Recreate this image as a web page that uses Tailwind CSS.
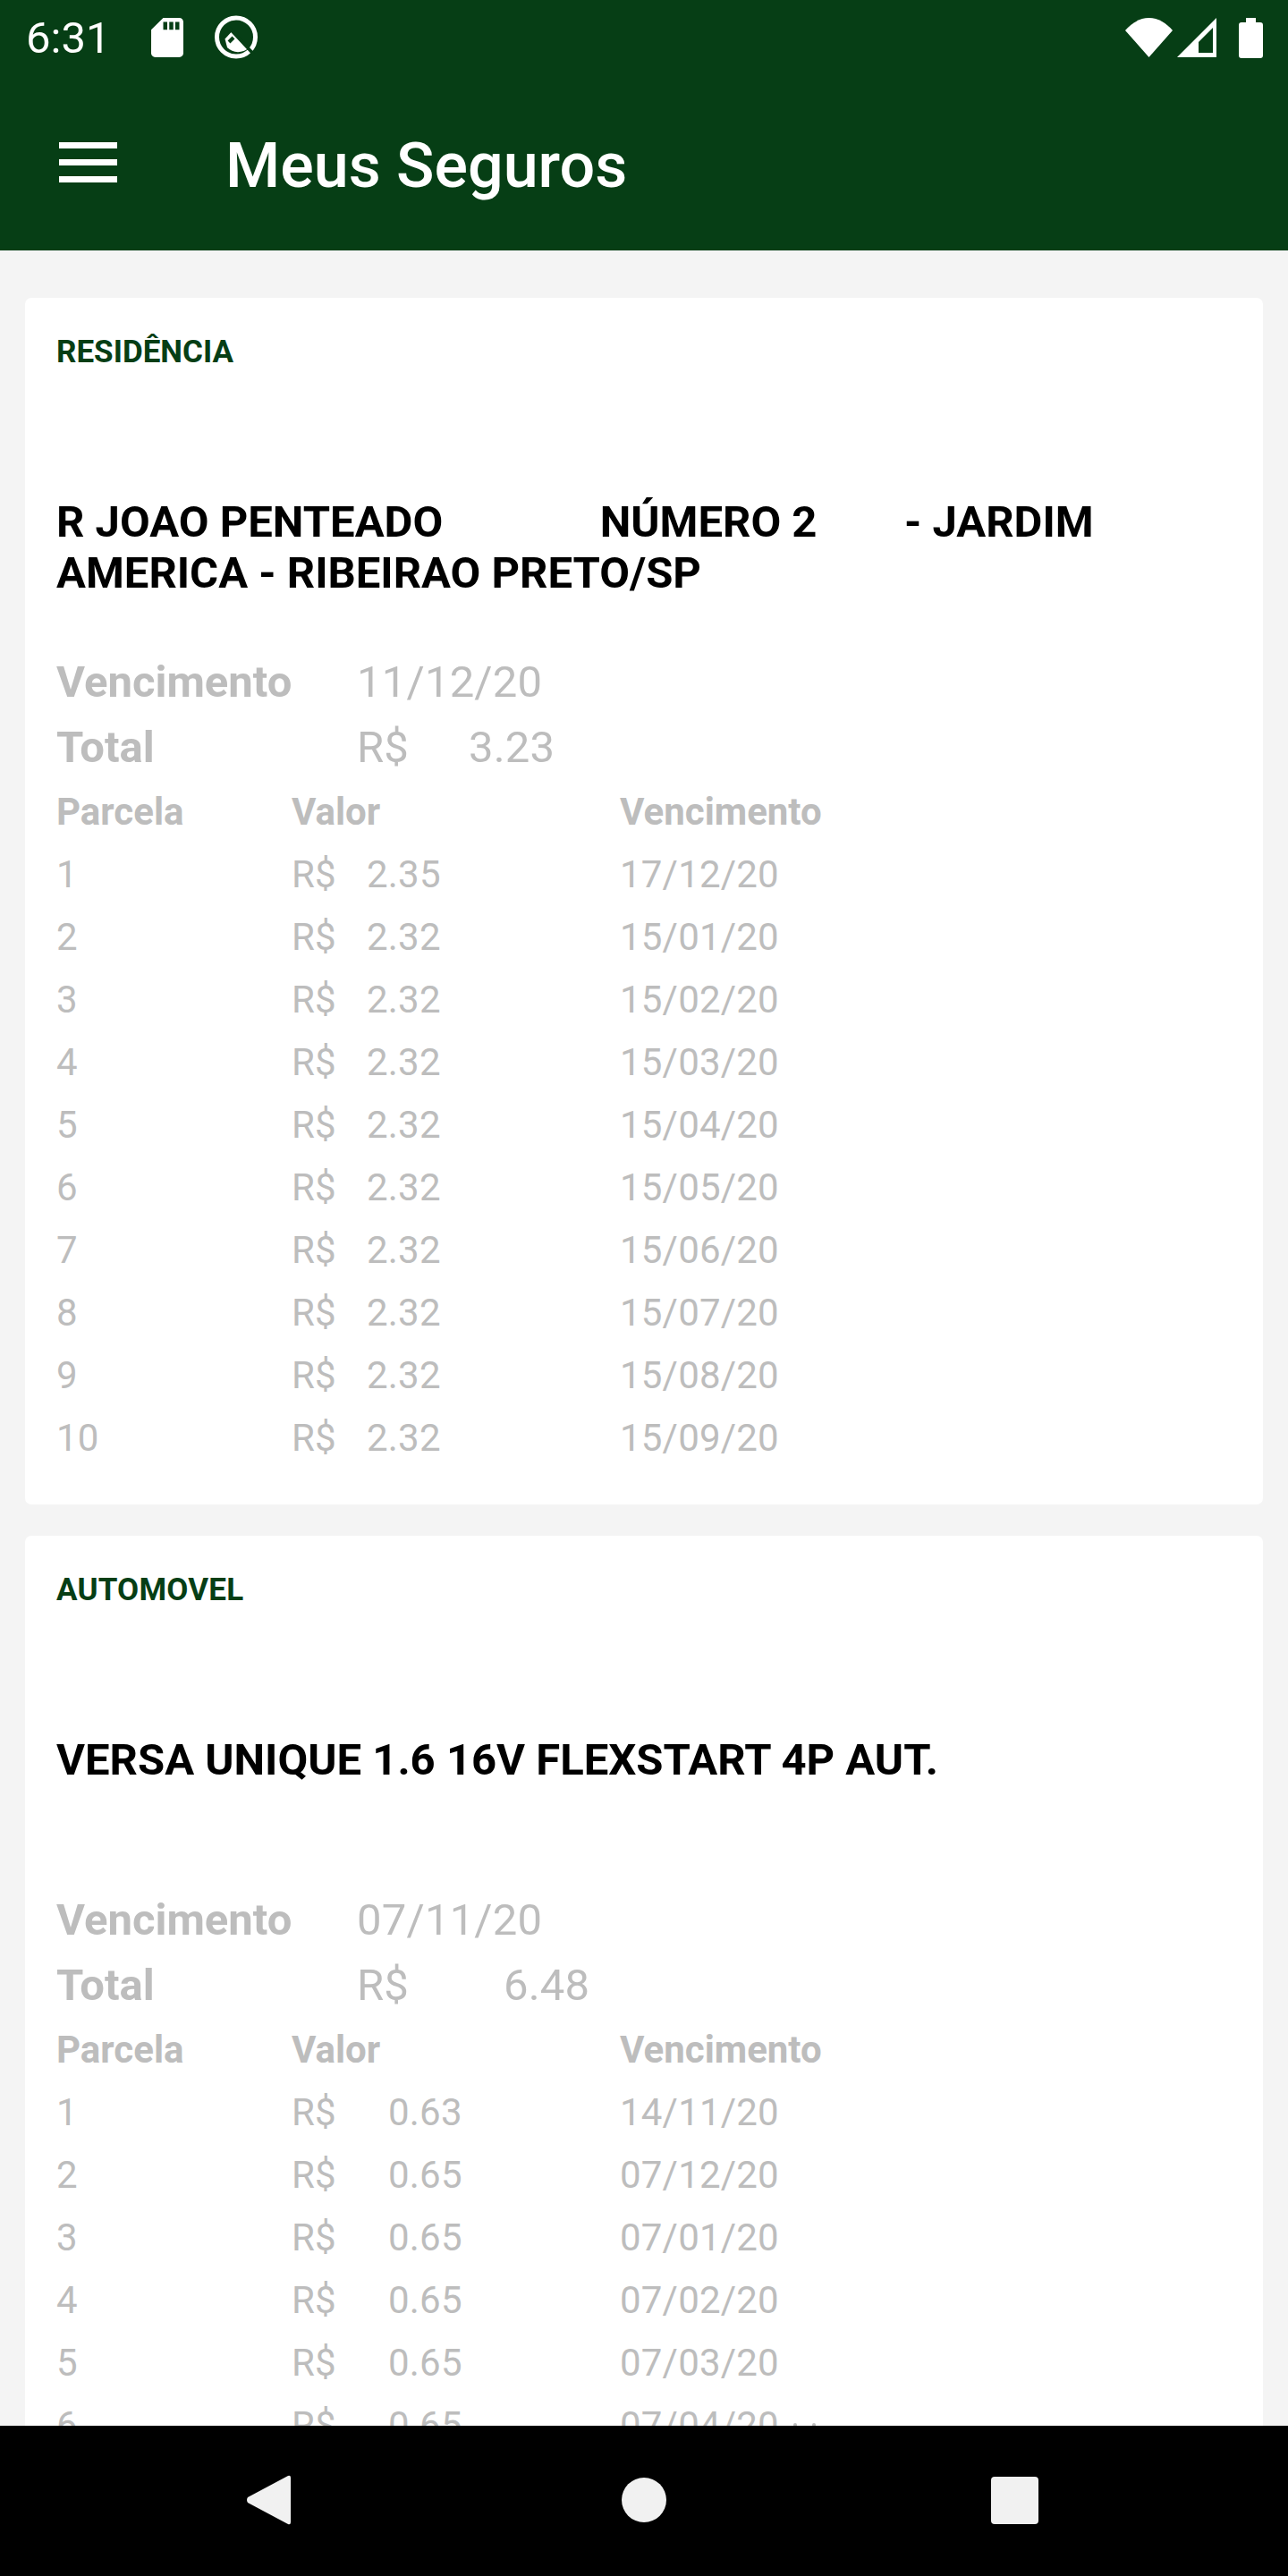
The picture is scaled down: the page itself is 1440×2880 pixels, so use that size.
<!DOCTYPE html>
<html lang="pt">
<head>
<meta charset="utf-8">
<script src="https://cdn.jsdelivr.net/npm/@tailwindcss/browser@4"></script>
</head>
<body class="m-0">
<div class="w-[1440px] h-[2880px] flex flex-col overflow-hidden bg-[#f4f4f4] font-['Roboto',sans-serif]">
  <header class="bg-[#063e15] text-white shrink-0">
    <div class="h-[84px] flex items-center pl-[29px] pr-[28px]">
      <span class="text-[49px] leading-none w-[140px]">6:31</span>
      <svg class="w-[36px] h-[44px] mr-[34px]" viewBox="4 2 16 20" preserveAspectRatio="none" fill="#fff"><path d="M18 2h-8L4.020 8 4 20c0 1.100.9 2 2 2h12c1.100 0 2-.9 2-2V4c0-1.100-.9-2-2-2zm-6 6h-2V4h2v4zm3 0h-2V4h2v4zm3 0h-2V4h2v4z"/></svg>
      <svg class="w-[50px] h-[50px]" viewBox="0 0 50 50" fill="none"><circle cx="25" cy="24.500" r="21.500" stroke="#fff" stroke-width="5"/><path d="M12.500 26.500 20.500 18 39 36.500A17 17 0 0 1 15 36Z" fill="#fff"/><path d="M17 30 22 25" stroke="#063e15" stroke-width="4"/><path d="M16 13 45 44" stroke="#063e15" stroke-width="3.500"/></svg>
      <div class="flex-1"></div>
      <svg class="w-[53px] h-[44px]" viewBox="0 0 53 44" fill="#fff"><path d="M0 14C7 6 16 0 26.500 0S46 6 53 14L26.500 44Z"/></svg>
      <svg class="w-[44px] h-[44px] ml-[5px]" viewBox="0 0 44 44" fill="#fff"><path fill-rule="evenodd" d="M44 0V44H0ZM40 11 24 27V39H40Z"/></svg>
      <svg class="w-[27px] h-[45px] ml-[25px]" viewBox="0 0 27 45" fill="#fff"><path d="M8 0H19V5H24Q27 5 27 8V42Q27 45 24 45H3Q0 45 0 42V8Q0 5 3 5H8Z"/></svg>
    </div>
    <div class="h-[196px] flex items-center pl-[66px] pb-[2px]">
      <div class="w-[65px] h-[45px] flex flex-col justify-between">
        <div class="h-[7px] bg-white"></div>
        <div class="h-[7px] bg-white"></div>
        <div class="h-[7px] bg-white"></div>
      </div>
      <h1 class="ml-[121px] mt-[8px] text-[70px] leading-none font-medium">Meus Seguros</h1>
    </div>
  </header>

  <main class="flex-1 min-h-0 overflow-hidden px-[28px] pt-[53px] flex flex-col gap-[35px]">
    <section class="bg-white rounded-[7px] h-[1349px] shrink-0 px-[35px] pt-[40px] text-[#bdbdbd]">
      <p class="text-[#063e15] text-[35px] leading-[42px] font-bold">RESIDÊNCIA</p>
      <p class="mt-[140px] text-black text-[49px] leading-[57px] font-bold whitespace-pre-wrap">R JOAO PENTEADO              <span class="ml-[5px]">NÚMERO 2</span>        - JARDIM AMERICA - RIBEIRAO PRETO/SP</p>
      <div class="mt-[57px] flex h-[73px] items-center text-[49px]"><b class="w-[336px] font-bold">Vencimento</b><span class="tracking-[0.2px]">11/12/20</span></div>
      <div class="flex h-[73px] items-center text-[49px]"><b class="w-[336px] font-bold">Total</b><span class="w-[125px]">R$</span><span class="tracking-[0.2px]">3.23</span></div>
      <div class="flex h-[70px] items-center text-[42px] font-bold"><span class="w-[263px]">Parcela</span><span class="w-[367px]">Valor</span><span>Vencimento</span></div>
      <div class="flex h-[70px] items-center text-[42px] tracking-[0.2px]"><span class="w-[263px]">1</span><span class="w-[84px]">R$</span><span class="w-[283px]">2.35</span><span>17/12/20</span></div>
      <div class="flex h-[70px] items-center text-[42px] tracking-[0.2px]"><span class="w-[263px]">2</span><span class="w-[84px]">R$</span><span class="w-[283px]">2.32</span><span>15/01/20</span></div>
      <div class="flex h-[70px] items-center text-[42px] tracking-[0.2px]"><span class="w-[263px]">3</span><span class="w-[84px]">R$</span><span class="w-[283px]">2.32</span><span>15/02/20</span></div>
      <div class="flex h-[70px] items-center text-[42px] tracking-[0.2px]"><span class="w-[263px]">4</span><span class="w-[84px]">R$</span><span class="w-[283px]">2.32</span><span>15/03/20</span></div>
      <div class="flex h-[70px] items-center text-[42px] tracking-[0.2px]"><span class="w-[263px]">5</span><span class="w-[84px]">R$</span><span class="w-[283px]">2.32</span><span>15/04/20</span></div>
      <div class="flex h-[70px] items-center text-[42px] tracking-[0.2px]"><span class="w-[263px]">6</span><span class="w-[84px]">R$</span><span class="w-[283px]">2.32</span><span>15/05/20</span></div>
      <div class="flex h-[70px] items-center text-[42px] tracking-[0.2px]"><span class="w-[263px]">7</span><span class="w-[84px]">R$</span><span class="w-[283px]">2.32</span><span>15/06/20</span></div>
      <div class="flex h-[70px] items-center text-[42px] tracking-[0.2px]"><span class="w-[263px]">8</span><span class="w-[84px]">R$</span><span class="w-[283px]">2.32</span><span>15/07/20</span></div>
      <div class="flex h-[70px] items-center text-[42px] tracking-[0.2px]"><span class="w-[263px]">9</span><span class="w-[84px]">R$</span><span class="w-[283px]">2.32</span><span>15/08/20</span></div>
      <div class="flex h-[70px] items-center text-[42px] tracking-[0.2px]"><span class="w-[263px]">10</span><span class="w-[84px]">R$</span><span class="w-[283px]">2.32</span><span>15/09/20</span></div>
    </section>
    <section class="bg-white rounded-[7px] h-[1400px] shrink-0 px-[35px] pt-[40px] text-[#bdbdbd]">
      <p class="text-[#063e15] text-[35px] leading-[42px] font-bold tracking-[0.2px]">AUTOMOVEL</p>
      <p class="mt-[140px] text-black text-[49px] leading-[57px] font-bold whitespace-pre-wrap">VERSA UNIQUE 1.6 16V FLEXSTART 4P AUT.</p>
      <div class="mt-[114px] flex h-[73px] items-center text-[49px]"><b class="w-[336px] font-bold">Vencimento</b><span class="tracking-[0.2px]">07/11/20</span></div>
      <div class="flex h-[73px] items-center text-[49px]"><b class="w-[336px] font-bold">Total</b><span class="w-[164px]">R$</span><span class="tracking-[0.2px]">6.48</span></div>
      <div class="flex h-[70px] items-center text-[42px] font-bold"><span class="w-[263px]">Parcela</span><span class="w-[367px]">Valor</span><span>Vencimento</span></div>
      <div class="flex h-[70px] items-center text-[42px] tracking-[0.2px]"><span class="w-[263px]">1</span><span class="w-[108px]">R$</span><span class="w-[259px]">0.63</span><span>14/11/20</span></div>
      <div class="flex h-[70px] items-center text-[42px] tracking-[0.2px]"><span class="w-[263px]">2</span><span class="w-[108px]">R$</span><span class="w-[259px]">0.65</span><span>07/12/20</span></div>
      <div class="flex h-[70px] items-center text-[42px] tracking-[0.2px]"><span class="w-[263px]">3</span><span class="w-[108px]">R$</span><span class="w-[259px]">0.65</span><span>07/01/20</span></div>
      <div class="flex h-[70px] items-center text-[42px] tracking-[0.2px]"><span class="w-[263px]">4</span><span class="w-[108px]">R$</span><span class="w-[259px]">0.65</span><span>07/02/20</span></div>
      <div class="flex h-[70px] items-center text-[42px] tracking-[0.2px]"><span class="w-[263px]">5</span><span class="w-[108px]">R$</span><span class="w-[259px]">0.65</span><span>07/03/20</span></div>
      <div class="flex h-[70px] items-center text-[42px] tracking-[0.2px]"><span class="w-[263px]">6</span><span class="w-[108px]">R$</span><span class="w-[259px]">0.65</span><span>07/04/20</span><span class="ml-[16px] w-[4px] h-[4px] rounded-full bg-[#bdbdbd]"></span><span class="ml-[17px] w-[4px] h-[4px] rounded-full bg-[#bdbdbd]"></span></div>
    </section>
  </main>

  <nav class="h-[168px] shrink-0 bg-black relative z-10 flex items-center pb-[2px]">
    <svg class="ml-[275px] w-[50px] h-[56px]" viewBox="0 0 50 56" fill="#f1f1f1"><path d="M50 3V53Q50 56 47 55L2 31Q0 28 2 25L47 1Q50 0 50 3Z"/></svg>
    <div class="ml-[370px] w-[50px] h-[50px] rounded-full bg-[#f1f1f1]"></div>
    <div class="ml-[363px] w-[53px] h-[53px] rounded-[4px] bg-[#f1f1f1]"></div>
  </nav>
</div>
</body>
</html>
